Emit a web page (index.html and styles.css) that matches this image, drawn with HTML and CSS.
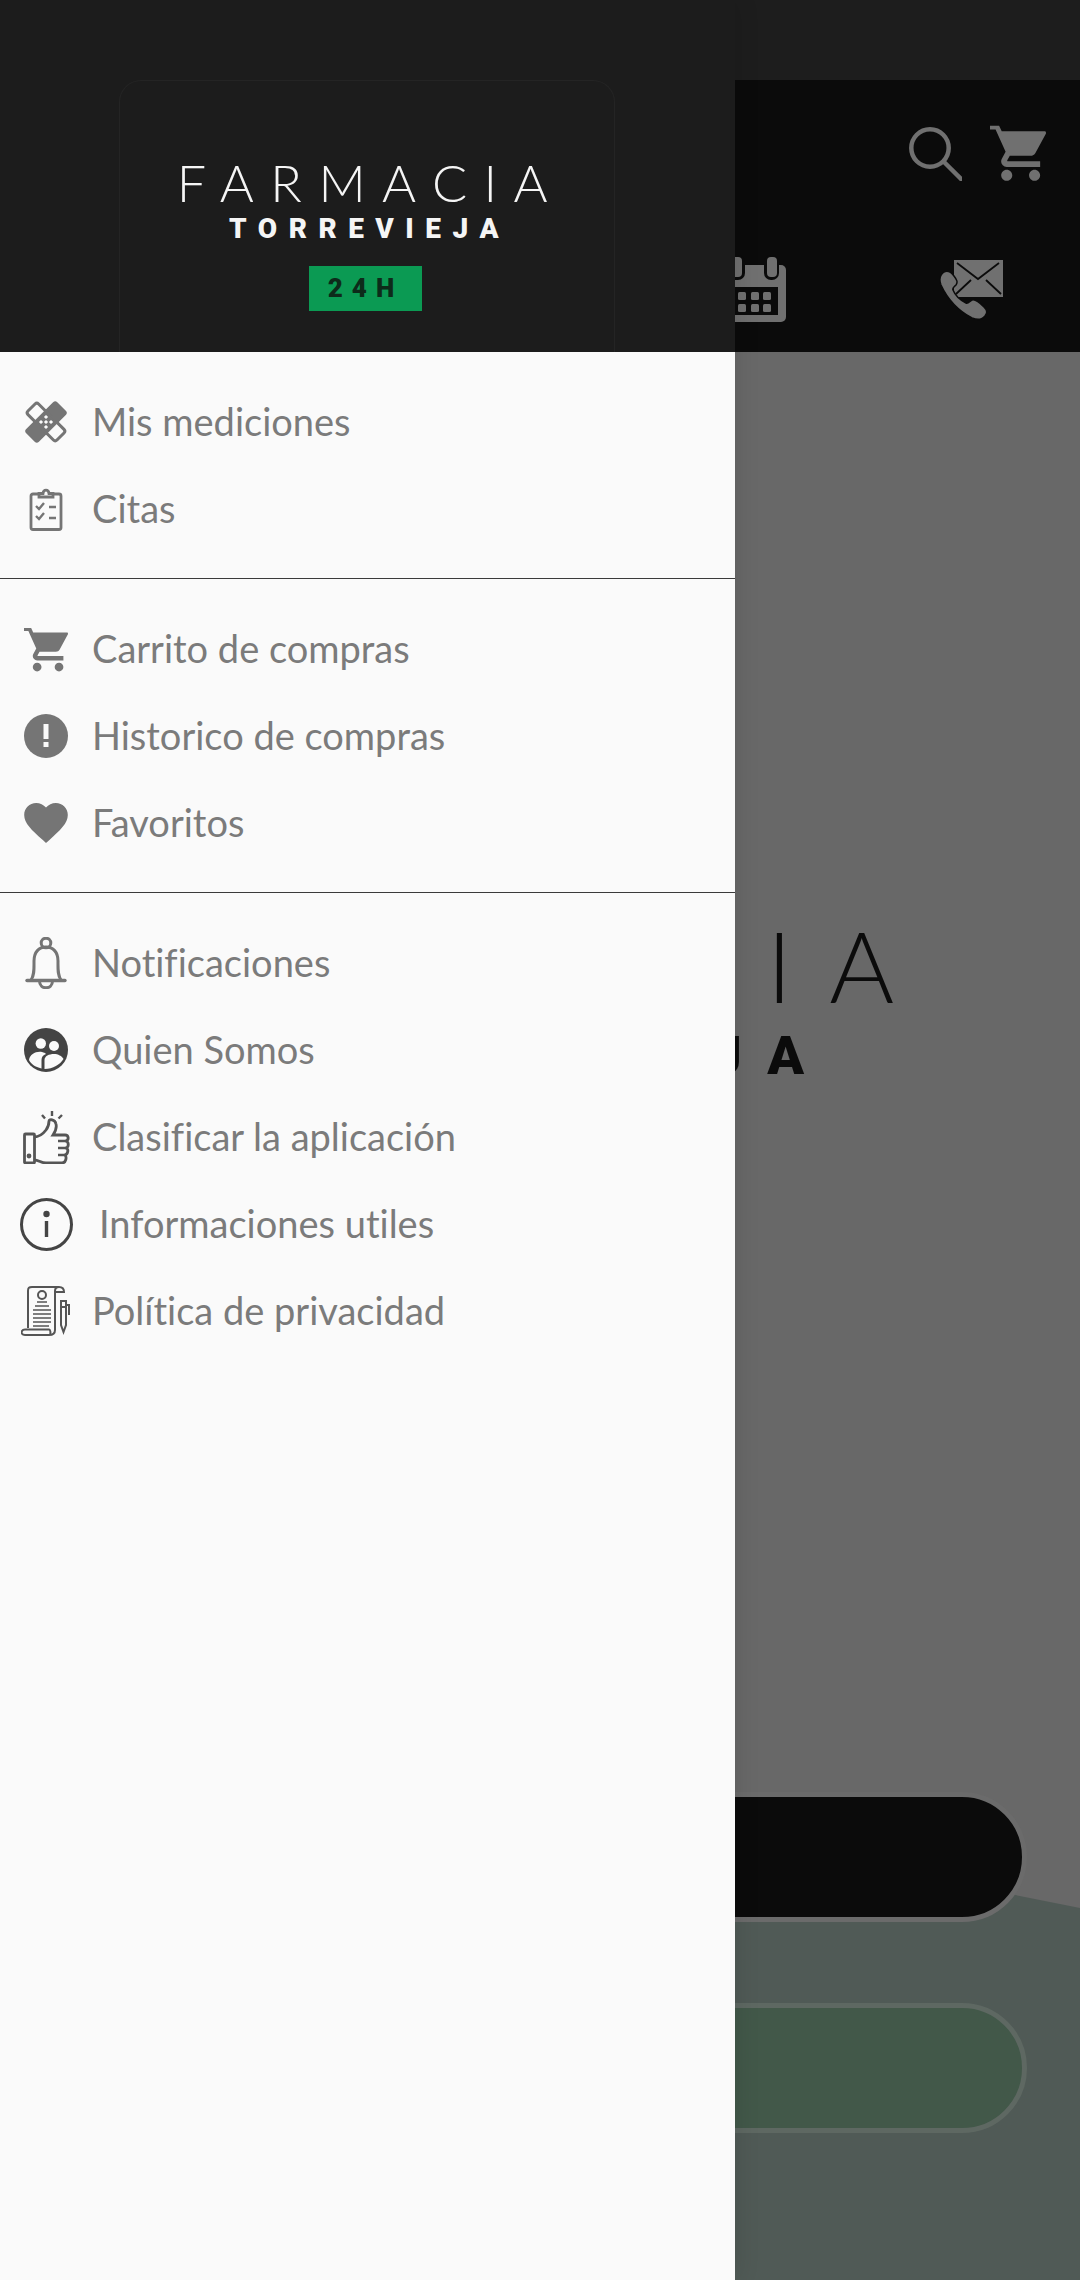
FILE: index.html
```html
<!DOCTYPE html>
<html lang="es">
<head>
<meta charset="utf-8">
<title>Farmacia Torrevieja</title>
<link rel="stylesheet" href="styles.css">
</head>
<body>
<svg class="defs" width="0" height="0" aria-hidden="true">
  <symbol id="cart" viewBox="1 2 20.1 20"><path d="M7 18c-1.1 0-1.99.9-1.99 2S5.9 22 7 22s2-.9 2-2-.9-2-2-2zM1 2v1.6h2l3.6 7.99-1.35 2.45c-.16.28-.25.61-.25.96 0 1.1.9 2 2 2h12v-2H7.42c-.14 0-.25-.11-.25-.25l.03-.12.9-1.63h7.45c.75 0 1.41-.41 1.75-1.03L21 5.2c.08-.14.1-.2.1-.4 0-.4-.1-.6-.6-.6H5.21l-.94-2H1zm16 16c-1.1 0-1.99.9-1.99 2s.89 2 1.99 2 2-.9 2-2-.9-2-2-2z"/></symbol>
</svg>
<div class="page">
  <div class="status"></div>
  <header class="appbar">
    <div class="bar-row top">
      <svg class="i-search" viewBox="0 0 53 56"><circle cx="21" cy="23" r="18.7" fill="none" stroke="#707070" stroke-width="4.5"/><path d="M35 37 52 54" stroke="#707070" stroke-width="4.5" stroke-linecap="round"/></svg>
      <svg class="i-cart-top"><use href="#cart"/></svg>
    </div>
    <div class="bar-row tabs">
      <svg class="i-cal" viewBox="0 0 64 65">
        <rect x="0" y="8" width="64" height="57" rx="5" fill="#707070"/>
        <rect x="5" y="-2" width="18" height="25" rx="7" fill="#0b0b0b"/>
        <rect x="42" y="-2" width="15" height="25" rx="7" fill="#0b0b0b"/>
        <rect x="8" y="0" width="12" height="20" rx="4" fill="#707070"/>
        <rect x="45" y="0" width="10" height="20" rx="4" fill="#707070"/>
        <rect x="2" y="30" width="54" height="28" fill="#0b0b0b"/>
        <g fill="#707070"><rect x="4" y="35" width="8" height="8" rx="1.5"/><rect x="16" y="35" width="8" height="8" rx="1.5"/><rect x="29" y="35" width="8" height="8" rx="1.5"/><rect x="41" y="35" width="8" height="8" rx="1.5"/><rect x="4" y="47" width="8" height="8" rx="1.5"/><rect x="16" y="47" width="8" height="8" rx="1.5"/><rect x="29" y="47" width="8" height="8" rx="1.5"/><rect x="41" y="47" width="8" height="8" rx="1.5"/></g>
      </svg>
      <svg class="i-contact" viewBox="0 0 64 62">
        <rect x="15" y="0" width="49" height="37" fill="#707070"/>
        <path d="M18 3 39 19 60 3M17 34 32 20M62 34 47 20" fill="none" stroke="#0b0b0b" stroke-width="1.8"/>
        <path d="M5 12C9 10 12 12 15 16 18 20 19 22 17 25 15 27 13 28 14 30 16 35 21 40 27 43 29 44 31 41 33 40 36 39 40 42 45 47 49 51 48 53 46 56 43 60 38 60 33 58 18 50 8 38 2 25 0 20 1 15 5 12Z" fill="#707070" stroke="#0b0b0b" stroke-width="1.5"/>
      </svg>
    </div>
  </header>
  <main class="content">
    <div class="shape"></div>
    <div class="logo hero">
      <div class="logo-name">FARMACIA</div>
      <div class="logo-city">TORREVIEJA</div>
    </div>
    <div class="pill pill-dark"></div>
    <div class="pill pill-green"></div>
  </main>

  <nav class="drawer">
    <div class="drawer-head">
      <div class="logo-frame">
        <div class="logo small">
          <div class="logo-name">FARMACIA</div>
          <div class="logo-city">TORREVIEJA</div>
          <div class="logo-badge">24H</div>
        </div>
      </div>
    </div>
    <ul class="section">
      <li class="row"><span class="slot"><svg class="ic" width="44" height="44" viewBox="0 0 44 44">
        <rect x="0" y="13" width="44" height="18" rx="3" fill="#757575" transform="rotate(-45 22 22)"/>
        <g transform="rotate(45 22 22)"><rect x="1.5" y="14.5" width="41" height="15" rx="2.5" fill="#fafafa" stroke="#757575" stroke-width="3"/><rect x="13" y="13" width="3" height="18" fill="#757575"/><rect x="28" y="13" width="3" height="18" fill="#757575"/></g>
        <rect x="15" y="15" width="14" height="14" fill="#757575" transform="rotate(45 22 22)"/>
        <g fill="#fafafa"><rect x="20.5" y="15.5" width="3" height="3" transform="rotate(45 22 17)"/><rect x="15.5" y="20.5" width="3" height="3" transform="rotate(45 17 22)"/><rect x="20.5" y="20.5" width="3" height="3" transform="rotate(45 22 22)"/><rect x="25.500" y="20.5" width="3" height="3" transform="rotate(45 27 22)"/><rect x="20.5" y="25.5" width="3" height="3" transform="rotate(45 22 27)"/></g>
      </svg></span><span class="label">Mis mediciones</span></li>
      <li class="row"><span class="slot"><svg class="ic" width="34" height="44" viewBox="0 0 34 44" fill="none" stroke="#757575" stroke-width="2.800">
        <rect x="2" y="7" width="30" height="35.500" rx="2"/>
        <path d="M10 10V6.500H14C14.500 2 19.500 2 20 6.500H24V10Z" fill="#fafafa"/>
        <path d="M7 19 10 22 15 16M7 29 10 32 15 26" stroke-width="2.400"/><path d="M20 20H27M20 31H27" stroke-width="2.400"/>
      </svg></span><span class="label">Citas</span></li>
    </ul>
    <ul class="section">
      <li class="row"><span class="slot"><svg class="ic ic-cart" width="44" height="45"><use href="#cart"/></svg></span><span class="label">Carrito de compras</span></li>
      <li class="row"><span class="slot"><svg class="ic" width="44" height="44" viewBox="0 0 44 44"><circle cx="22" cy="22" r="22" fill="#757575"/><rect x="19.500" y="10" width="5" height="15" fill="#fafafa"/><rect x="19.500" y="28" width="5" height="5" fill="#fafafa"/></svg></span><span class="label">Historico de compras</span></li>
      <li class="row"><span class="slot"><svg class="ic" width="44" height="40" viewBox="2 3 20 18.350" fill="#757575"><path d="M12 21.350l-1.450-1.320C5.400 15.360 2 12.280 2 8.500 2 5.420 4.420 3 7.500 3c1.740 0 3.410.81 4.500 2.090C13.090 3.810 14.760 3 16.500 3 19.580 3 22 5.420 22 8.500c0 3.780-3.400 6.860-8.550 11.540L12 21.350z"/></svg></span><span class="label">Favoritos</span></li>
    </ul>
    <ul class="section last">
      <li class="row"><span class="slot"><svg class="ic" width="42" height="52" viewBox="0 0 42 52" fill="none" stroke="#757575" stroke-width="3">
        <circle cx="21" cy="6" r="4.800"/>
        <path d="M6 43C9.500 38 9 32 9 24 9 15 14 10 21 10S33 15 33 24C33 32 32.500 38 36 43"/>
        <path d="M2 43.500H40" stroke-width="3.400" stroke-linecap="round"/>
        <path d="M14.500 44C14.500 53 27.500 53 27.500 44"/>
      </svg></span><span class="label">Notificaciones</span></li>
      <li class="row"><span class="slot"><svg class="ic" width="44" height="44" viewBox="0 0 44 44">
        <circle cx="22" cy="22" r="22" fill="#444"/>
        <circle cx="16.800" cy="15.500" r="5.200" fill="#fafafa"/><circle cx="30" cy="18" r="5" fill="#fafafa"/>
        <path d="M5 32C6 26 12 23 18 24 20 24.500 21 25 22 26 19 27 17.500 29 17.500 32V40.500C11 39 7 36 5 32Z" fill="#fafafa"/>
        <path d="M20.500 41V32C20.500 28 25 26 30 26 34 26 38 28 39.500 31 36 36.500 29 41 20.500 41Z" fill="#fafafa"/>
      </svg></span><span class="label">Quien Somos</span></li>
      <li class="row"><span class="slot"><svg class="ic ic-thumb" width="47" height="53" viewBox="0 0 47 53" fill="none" stroke="#555" stroke-width="2.800">
        <rect x="1.500" y="23" width="10" height="29" rx="1"/>
        <circle cx="6" cy="45" r="1" fill="#555"/>
        <path d="M11 26C17 26 20 23 23 19 26 15 26 13 26 10 26 8 32 8 33 13 34 17 32 21 30 24H42C46 24 46 29 43 30 46 31 46 36 43 37 46 38 45 43 42 44 44 46 43 52 39 52H23C18 52 16 49 11 49"/>
        <path d="M35 30H43M35 37H43M35 44H42" stroke-width="2.400"/>
        <path d="M29 0V5M19 4 22 7.500M39 4 35.500 7.500" stroke-width="2.400"/>
      </svg></span><span class="label">Clasificar la aplicación</span></li>
      <li class="row"><span class="slot"><svg class="ic" width="53" height="53" viewBox="0 0 53 53" fill="none" stroke="#444" stroke-width="3">
        <circle cx="26.500" cy="26.500" r="25"/>
        <circle cx="26.500" cy="16" r="3.200" fill="#444" stroke="none"/>
        <path d="M26.500 23V39" stroke-width="3.400"/>
      </svg></span><span class="label label-shift">Informaciones utiles</span></li>
      <li class="row"><span class="slot"><svg class="ic" width="50" height="50" viewBox="0 0 50 50" fill="none" stroke="#555" stroke-width="2">
        <path d="M7 42V5C7 1.500 8 1 11 1H38C35 1 34 2 34 5V44C34 48 31 49 28 49H4C1 49 0 47 1 45 1.500 44 3 43.500 4 43.500H28C29 43.500 30 46 29 49"/>
        <path d="M38 1C41 1 43 3 43 6H34"/>
        <circle cx="21" cy="9" r="4"/>
        <path d="M16 16H26M14 20H28M12 24H30M12 28H30M12 32H30M12 36H30M12 40H28" stroke-width="1.600"/>
        <path d="M40 15H45V39L42.500 46 40 39ZM45 19H48V29M40 21H45"/>
      </svg></span><span class="label">Política de privacidad</span></li>
    </ul>
  </nav>
</div>
</body>
</html>
```
FILE: styles.css
```css
* { box-sizing: border-box; }
html, body { margin: 0; padding: 0; }
body { font-family: "Lato", "Liberation Sans", sans-serif; background: #686868; }
.defs { position: absolute; }
.page { position: relative; width: 1080px; height: 2280px; overflow: hidden; display: flex; flex-direction: column; background: #686868; }

.status { height: 80px; background: #1d1d1d; flex: none; }
.appbar { height: 272px; flex: none; background: #0b0b0b; padding: 45px 34px 0 0; display: flex; flex-direction: column; fill: #707070; }
.bar-row { display: flex; justify-content: flex-end; }
.top { gap: 28px; height: 56px; align-items: flex-start; }
.i-search { width: 53px; height: 56px; }
.i-cart-top { width: 56px; height: 56px; }
.tabs { margin-top: 76px; gap: 153px; padding-right: 43px; align-items: flex-end; height: 65px; }
.i-cal { width: 64px; height: 65px; overflow: visible; }
.i-contact { width: 64px; height: 62px; }

.content { position: relative; flex: 1; display: flex; flex-direction: column; align-items: center; background: #686868; }
.shape { position: absolute; left: 0; right: 0; bottom: 0; top: 1340px; background: #505a56; clip-path: polygon(0 0, 100% 216px, 100% 100%, 0 100%); }
.logo { position: relative; display: flex; flex-direction: column; align-items: center; }
.logo-name { font-family: "Lato", sans-serif; font-weight: 300; white-space: nowrap; }
.logo-city { font-family: "Roboto", sans-serif; font-weight: 900; white-space: nowrap; }
.hero { margin-top: 558px; color: #0b0b0b; height: 232px; }
.hero .logo-name { font-size: 99px; line-height: 110px; letter-spacing: 37px; }
.hero .logo-city { font-size: 54px; line-height: 60px; letter-spacing: 26px; margin-top: 6px; }
.pill { position: relative; width: 974px; height: 130px; border-radius: 65px; flex: none; border: 5px solid; }
.pill-dark { background: #0b0b0b; border-color: #6b6b6b; margin-top: 650px; }
.pill-green { margin-top: 81px; background: #425849; border-color: #5e6862; }

.drawer { position: absolute; left: 0; top: 0; bottom: 0; width: 735px; background: #fafafa; display: flex; flex-direction: column; box-shadow: 0 0 24px rgba(0,0,0,.12); }
.drawer-head { height: 352px; flex: none; background: #1c1c1c; padding-top: 80px; display: flex; justify-content: center; }
.logo-frame { width: 496px; height: 272px; margin-left: -1px; border: 1px solid #242424; border-bottom: 0; border-radius: 22px 22px 0 0; display: flex; justify-content: center; }
.small { color: #f5f5f5; padding-top: 73px; margin-left: -1px; }
.small .logo-name { font-size: 52px; line-height: 56px; letter-spacing: 16.500px; padding-left: 8px; }
.small .logo-city { font-size: 28px; line-height: 32px; letter-spacing: 11.500px; margin-top: 3px; padding-left: 6px; }
.logo-badge { margin-top: 21px; margin-left: -2px; width: 113px; height: 45px; background: #0b9a53; color: #0d2b1a; font-family: "Roboto", sans-serif; font-weight: 900; font-size: 26px; letter-spacing: 9px; line-height: 45px; text-align: center; }

.section { list-style: none; margin: 0; padding: 26.500px 0 25.500px; border-bottom: 1px solid #3a3a3a; flex: none; }
.section.last { border-bottom: 0; }
.row { height: 87px; display: flex; align-items: center; }
.slot { width: 92px; flex: none; display: flex; justify-content: center; align-items: center; }
.ic { display: block; flex: none; }
.ic-cart { fill: #757575; }
.label { font-size: 38px; line-height: 46px; margin-top: -2px; color: #7b7b7b; white-space: nowrap; font-variant-ligatures: none; }
.label-shift { margin-left: 7px; }
```
